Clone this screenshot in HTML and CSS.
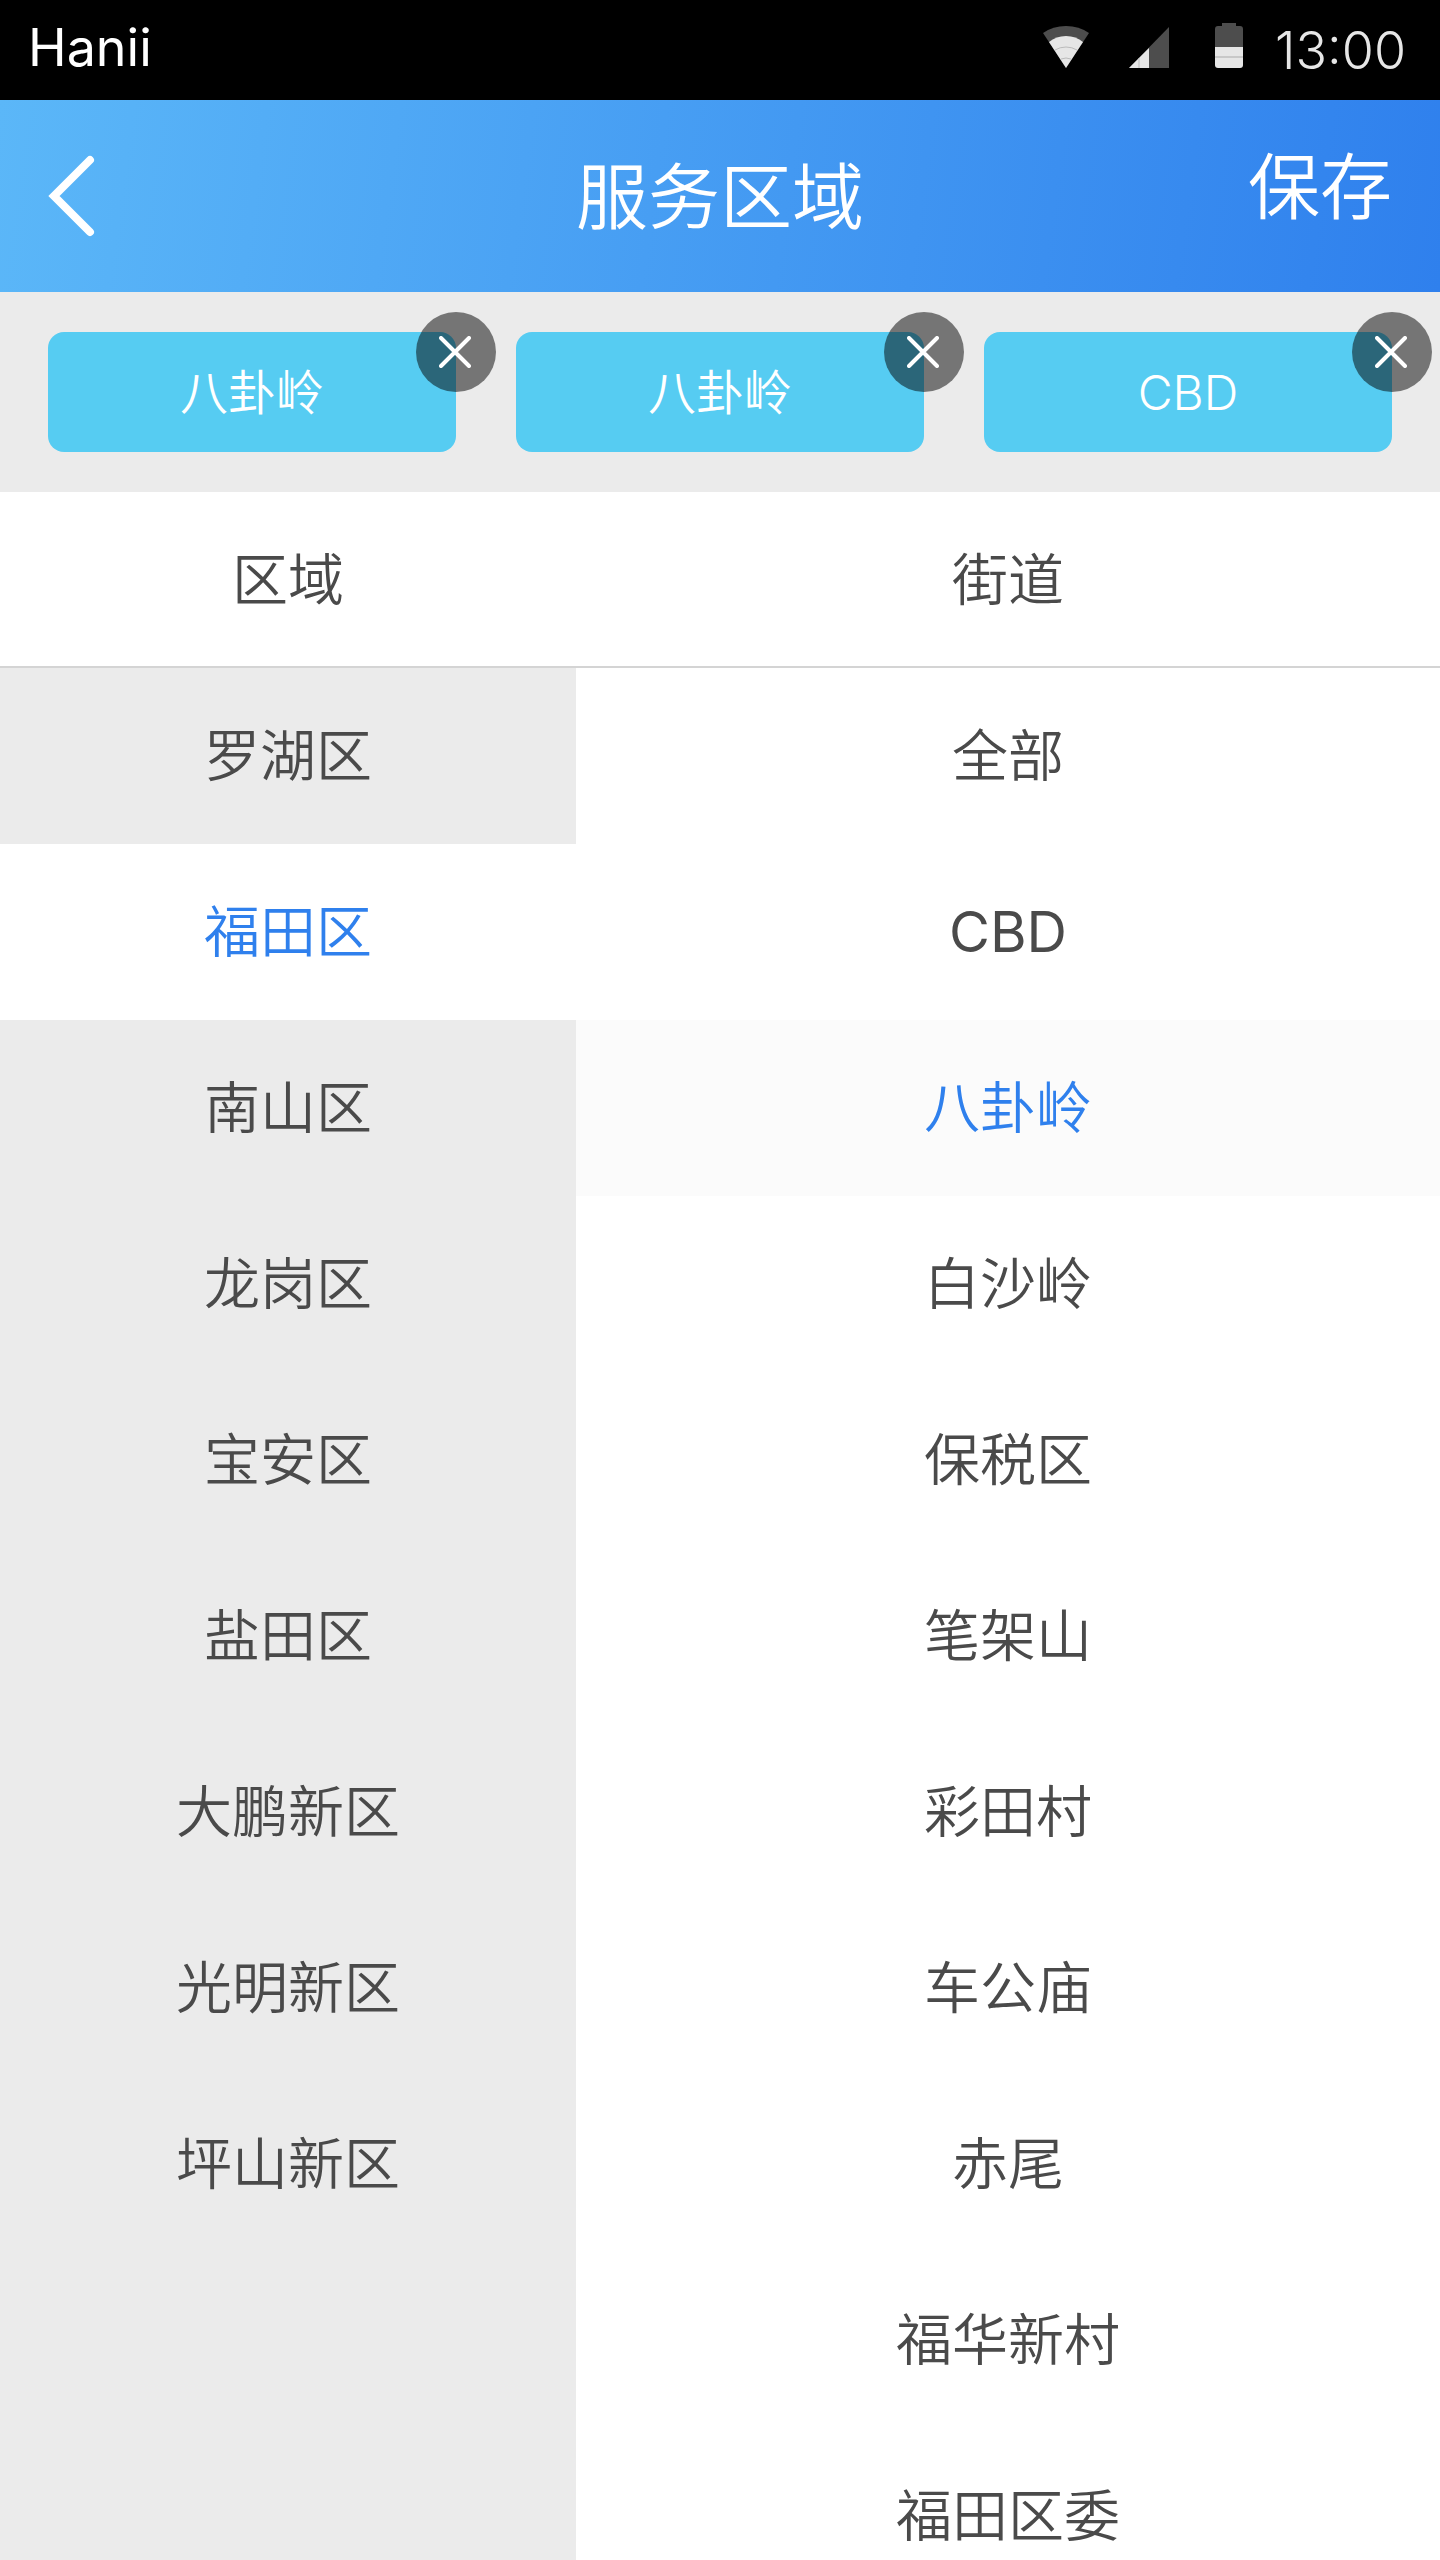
FILE: index.html
```html
<!DOCTYPE html>
<html lang="zh-CN">
<head>
<meta charset="utf-8">
<meta name="viewport" content="width=device-width, initial-scale=1">
<title>服务区域</title>
<link rel="stylesheet" href="styles.css">
</head>
<body>
<div class="app">
  <div class="status">
    <span class="carrier">Hanii</span>
    <div class="status-icons">
      <svg class="wifi" width="46" height="42" viewBox="0 0 46 42" aria-hidden="true">
        <path fill="#4d4d4d" d="M0 7Q10 0 23 0T46 7L23 42Z"/>
        <path fill="#e6e6e6" d="M6 16Q13 10 23 10T40 16L23 42Z"/>
        <path fill="none" stroke="#bbb" d="M12 24Q17 21 23 21T34 24M18 33Q23 31 28 33"/>
      </svg>
      <svg class="signal" width="46" height="42" viewBox="0 0 46 42" aria-hidden="true">
        <path fill="#4d4d4d" d="M40 1V42H0Z"/>
        <path fill="#e6e6e6" d="M20 22V42H0Z"/>
        <path stroke="#bbb" d="M10 32V42"/>
      </svg>
      <svg class="battery" width="28" height="46" viewBox="0 0 28 46" aria-hidden="true">
        <path fill="#4d4d4d" d="M7 1H21V4H25Q28 4 28 7V26H0V7Q0 4 3 4H7Z"/>
        <path fill="#e6e6e6" d="M0 25H28V43Q28 46 25 46H3Q0 46 0 43Z"/>
        <path stroke="#aaa" d="M0 35H28"/>
      </svg>
    </div>
    <time class="clock">13:00</time>
  </div>

  <header class="navbar">
    <button class="back" type="button" aria-label="返回">
      <svg width="48" height="84" viewBox="0 0 48 84" aria-hidden="true">
        <path d="M42 6L6 42L42 78" fill="none" stroke="#fff" stroke-width="8" stroke-linecap="round"/>
      </svg>
    </button>
    <h1 class="title">服务区域</h1>
    <button class="save" type="button">保存</button>
  </header>

  <ul class="tags">
    <li class="tag">八卦岭
      <button class="remove" type="button" aria-label="移除"><svg width="34" height="32" viewBox="0 0 34 32"><path d="M2 2L30 30M30 2L2 30"/></svg></button>
    </li>
    <li class="tag">八卦岭
      <button class="remove" type="button" aria-label="移除"><svg width="34" height="32" viewBox="0 0 34 32"><path d="M2 2L30 30M30 2L2 30"/></svg></button>
    </li>
    <li class="tag">CBD
      <button class="remove" type="button" aria-label="移除"><svg width="34" height="32" viewBox="0 0 34 32"><path d="M2 2L30 30M30 2L2 30"/></svg></button>
    </li>
  </ul>

  <div class="heads">
    <h2 class="head">区域</h2>
    <h2 class="head">街道</h2>
  </div>

  <main class="picker">
    <ul class="list districts">
      <li><button class="row" type="button">罗湖区</button></li>
      <li><button class="row selected" type="button">福田区</button></li>
      <li><button class="row" type="button">南山区</button></li>
      <li><button class="row" type="button">龙岗区</button></li>
      <li><button class="row" type="button">宝安区</button></li>
      <li><button class="row" type="button">盐田区</button></li>
      <li><button class="row" type="button">大鹏新区</button></li>
      <li><button class="row" type="button">光明新区</button></li>
      <li><button class="row" type="button">坪山新区</button></li>
    </ul>
    <ul class="list streets">
      <li><button class="row" type="button">全部</button></li>
      <li><button class="row latin" type="button">CBD</button></li>
      <li><button class="row selected" type="button">八卦岭</button></li>
      <li><button class="row" type="button">白沙岭</button></li>
      <li><button class="row" type="button">保税区</button></li>
      <li><button class="row" type="button">笔架山</button></li>
      <li><button class="row" type="button">彩田村</button></li>
      <li><button class="row" type="button">车公庙</button></li>
      <li><button class="row" type="button">赤尾</button></li>
      <li><button class="row" type="button">福华新村</button></li>
      <li><button class="row" type="button">福田区委</button></li>
    </ul>
  </main>
</div>
</body>
</html>
```
FILE: styles.css
```css
* { box-sizing: border-box; }

body {
  margin: 0;
  background: #fff;
  color: #4a4a4a;
  font-family: Inter, "Noto Sans CJK SC", sans-serif;
  font-weight: 350;
}

ul, h1, h2 { margin: 0; padding: 0; list-style: none; font-weight: 350; }

button {
  margin: 0;
  padding: 0;
  border: 0;
  background: none;
  color: inherit;
  font: inherit;
  cursor: pointer;
}

svg { display: block; }

.app {
  display: flex;
  flex-direction: column;
  height: 100vh;
}

.status {
  display: flex;
  flex: none;
  align-items: center;
  height: 100px;
  padding: 0 34px 0 28px;
  background: #000;
  color: #fff;
  font-size: 52px;
  line-height: 64px;
}

.carrier { flex: 1; padding-bottom: 4px; font-weight: 400; }
.status-icons { display: flex; align-items: flex-end; gap: 40px; padding-bottom: 10px; }
.clock { margin-left: 32px; padding-top: 2px; color: #e6e6e6; }

.navbar {
  display: grid;
  flex: none;
  grid-template-columns: 1fr auto 1fr;
  align-items: center;
  height: 192px;
  padding: 0 48px;
  background: linear-gradient(98deg, #5bb7f8, #2f80ed);
  color: #fff;
  font-size: 72px;
  line-height: 104px;
}

.back { justify-self: start; }
.title { padding-top: 2px; font-size: 72px; }
.save { justify-self: end; padding-bottom: 18px; }

.tags {
  display: grid;
  flex: none;
  grid-template-columns: repeat(3, 1fr);
  gap: 60px;
  padding: 40px 48px;
  background: #ebebeb;
}

.tag {
  position: relative;
  height: 120px;
  border-radius: 16px;
  background: #56ccf2;
  color: #fff;
  font-size: 48px;
  line-height: 122px;
  text-align: center;
}

.remove {
  position: absolute;
  top: -20px;
  right: -40px;
  display: grid;
  place-items: center;
  width: 80px;
  height: 80px;
  border-radius: 50%;
  background: rgba(0, 0, 0, 0.5);
}

.remove path { stroke: #fff; stroke-width: 4; stroke-linecap: round; }

.heads, .picker {
  display: grid;
  grid-template-columns: 2fr 3fr;
}

.heads { flex: none; border-bottom: 2px solid #d4d4d4; }

.head {
  height: 174px;
  font-size: 56px;
  line-height: 176px;
  text-align: center;
}

.picker { flex: 1; min-height: 0; }

.list { overflow-y: auto; scrollbar-width: none; }
.districts { background: #ebebeb; }

.row {
  display: block;
  width: 100%;
  height: 176px;
  font-size: 56px;
  line-height: 176px;
  text-align: center;
}

.latin { font-weight: 400; }

.selected { color: #2f80ed; }
.districts .selected { background: #fff; }
.streets .selected { background: #fbfbfb; }
```
